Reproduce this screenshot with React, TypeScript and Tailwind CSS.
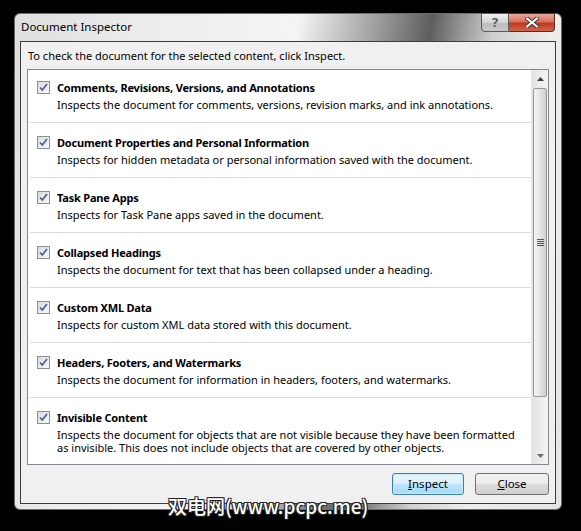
import React from "react";

const rows: { title: string; desc: string[] }[] = [
  { title: "Comments, Revisions, Versions, and Annotations", desc: ["Inspects the document for comments, versions, revision marks, and ink annotations."] },
  { title: "Document Properties and Personal Information", desc: ["Inspects for hidden metadata or personal information saved with the document."] },
  { title: "Task Pane Apps", desc: ["Inspects for Task Pane apps saved in the document."] },
  { title: "Collapsed Headings", desc: ["Inspects the document for text that has been collapsed under a heading."] },
  { title: "Custom XML Data", desc: ["Inspects for custom XML data stored with this document."] },
  { title: "Headers, Footers, and Watermarks", desc: ["Inspects the document for information in headers, footers, and watermarks."] },
  {
    title: "Invisible Content",
    desc: [
      "Inspects the document for objects that are not visible because they have been formatted",
      "as invisible. This does not include objects that are covered by other objects.",
    ],
  },
];

function Check() {
  return (
    <div className="w-[13px] h-[13px] border border-[#8e8f8f] bg-[linear-gradient(135deg,#dcdcdc,#f8f8f8)] flex items-center justify-center shrink-0">
      <svg width="11" height="11" viewBox="0 0 11 11">
        <path d="M2 5.5 L4.3 8 L9 2" fill="none" stroke="#4a5f97" strokeWidth="1.7" />
      </svg>
    </div>
  );
}

export default function App() {
  return (
    <div
      className="w-[581px] h-[531px] bg-black relative overflow-hidden"
      style={{ fontFamily: '"Noto Sans", "Open Sans", sans-serif' }}
    >
      <div className="absolute left-[14px] top-[13px] w-[548px] h-[497px] rounded-[6px] border border-[#6d6d6d] bg-[linear-gradient(100deg,#dedede_0%,#ececec_20%,#f4f4f4_45%,#9a9a9a_58%,#5e5e5e_66%,#cfcfcf_76%,#ededed_85%,#e4e4e4_100%)] flex flex-col">
        {/* title bar */}
        <div className="h-[27px] flex items-start relative">
          <div className="pl-[6px] pt-[5px] text-[11.5px] text-black leading-[16px]">Document Inspector</div>
          <div className="absolute right-[6px] top-[-1px] flex">
            <div className="w-[28px] h-[19px] border border-[#5a5a5a] rounded-bl-[4px] bg-[linear-gradient(180deg,#f0f0f0,#d4d4d4_50%,#bcbcbc_51%,#c8c8c8)] flex items-center justify-center text-[13px] font-bold text-[#5b5b5b] leading-none">
              ?
            </div>
            <div className="w-[46px] h-[19px] border border-l-0 border-[#5a2b22] rounded-br-[4px] bg-[linear-gradient(180deg,#e9a89c,#d8715f_45%,#c0381f_55%,#d2654c)] flex items-center justify-center">
              <svg width="14" height="11" viewBox="0 0 14 11">
                <path d="M2 1.5 L12 9.5 M12 1.5 L2 9.5" stroke="#3a3a3a" strokeWidth="4" strokeLinecap="square" />
                <path d="M2 1.5 L12 9.5 M12 1.5 L2 9.5" stroke="#ffffff" strokeWidth="2" strokeLinecap="square" />
              </svg>
            </div>
          </div>
        </div>
        {/* client */}
        <div className="mx-[5px] mb-[5px] flex-1 border border-[#3c3c3c] bg-[#f0f0f0] flex flex-col">
          <div className="pl-[7px] pt-[6px] h-[27px] text-[11px] leading-[15px] text-black">
            To check the document for the selected content, click Inspect.
          </div>
          <div className="mx-[6px] h-[396px] border border-[#828790] bg-white flex">
            <div className="flex-1 flex flex-col overflow-hidden">
              {rows.map((r, i) => (
                <div
                  key={i}
                  className={`h-[55px] shrink-0 flex ml-[2px] pl-[7px] pt-[12px] ${i === 0 ? "mt-[-2px]" : ""} ${i < rows.length - 1 ? "border-b border-[#dcdcdc]" : ""}`}
                >
                  <div className="pt-[1px]">
                    <Check />
                  </div>
                  <div className="pl-[7px] flex flex-col">
                    <div className="text-[11px] font-bold leading-[15px] tracking-[-0.2px] text-black">{r.title}</div>
                    <div className="mt-[3px]">
                      {r.desc.map((d, j) => (
                        <div key={j} className="text-[11px] leading-[13px] text-black">
                          {d}
                        </div>
                      ))}
                    </div>
                  </div>
                </div>
              ))}
            </div>
            {/* scrollbar */}
            <div className="w-[17px] bg-[linear-gradient(90deg,#e3e3e3,#f4f4f4)] border-l border-[#e8e8e8] flex flex-col">
              <div className="h-[17px] flex items-center justify-center">
                <svg width="7" height="4" viewBox="0 0 7 4">
                  <path d="M0 4 L3.5 0 L7 4 Z" fill="#3f3f3f" />
                </svg>
              </div>
              <div className="mx-[1px] mt-[1px] h-[309px] rounded-[2px] border border-[#979797] bg-[linear-gradient(90deg,#f4f4f4,#e4e4e4_50%,#cfcfcf)] flex items-center justify-center">
                <div className="flex flex-col gap-[1px]">
                  <div className="w-[7px] h-[1px] bg-[#555]" />
                  <div className="w-[7px] h-[1px] bg-[#555]" />
                  <div className="w-[7px] h-[1px] bg-[#555]" />
                  <div className="w-[7px] h-[1px] bg-[#555]" />
                </div>
              </div>
              <div className="flex-1" />
              <div className="h-[17px] flex items-center justify-center">
                <svg width="7" height="4" viewBox="0 0 7 4">
                  <path d="M0 0 L3.5 4 L7 0 Z" fill="#6d6d6d" />
                </svg>
              </div>
            </div>
          </div>
          <div className="flex justify-end pr-[6px] pt-[8px] gap-[11px]">
            <div className="w-[72px] h-[22px] rounded-[3px] border border-[#3c7fb1] bg-[linear-gradient(180deg,#eaf6fd,#d9f0fc_50%,#bee6fd_51%,#a7d9f5)] shadow-[inset_0_0_0_1px_#c5ecff] flex items-center justify-center text-[11.5px] text-black leading-none">
              <span><span className="underline">I</span>nspect</span>
            </div>
            <div className="w-[74px] h-[22px] rounded-[3px] border border-[#707070] bg-[linear-gradient(180deg,#f2f2f2,#ebebeb_50%,#dddddd_51%,#cfcfcf)] flex items-center justify-center text-[11.5px] text-black leading-none">
              <span><span className="underline">C</span>lose</span>
            </div>
          </div>
        </div>
      </div>
      {/* watermark */}
      <div
        className="absolute left-[168px] top-[493px] text-[19px] font-medium text-white leading-[26px]"
        style={{
          fontFamily: '"Noto Sans CJK SC", "Noto Sans", sans-serif',
          textShadow: "1px 1px 0 #222, -1px -1px 0 #222, 1px -1px 0 #222, -1px 1px 0 #222",
        }}
      >
        双电网(www.pcpc.me)
      </div>
    </div>
  );
}
